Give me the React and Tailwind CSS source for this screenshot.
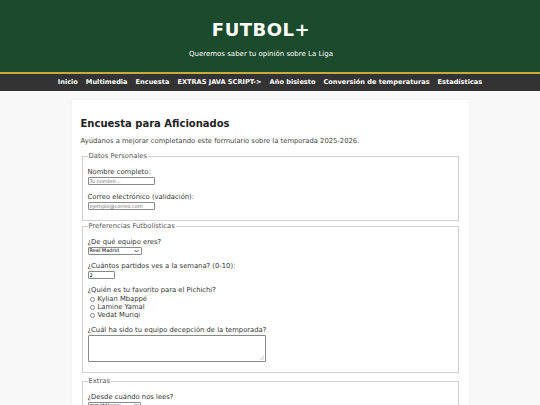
import React from 'react';

const navItems = [
  'Inicio',
  'Multimedia',
  'Encuesta',
  'EXTRAS JAVA SCRIPT->',
  'Año bisiesto',
  'Conversión de temperaturas',
  'Estadísticas',
];

const players = ['Kylian Mbappé', 'Lamine Yamal', 'Vedat Muriqi'];

const Label = ({ children, className = 'mt-[8px]' }) => (
  <label className={`block leading-[8px] ${className}`}>{children}</label>
);

const Fieldset = ({ legend, className = '', children }) => (
  <fieldset className={`mx-[1px] border border-[#cfcfcf] px-[5px] pb-[10px] ${className}`}>
    <legend className="px-[1px] leading-[8px] text-[#555]">{legend}</legend>
    {children}
  </fieldset>
);

const inputCls =
  'mt-[1px] block h-[8px] rounded-[1px] border border-[#8a8a8a] px-[1px] text-[5px] text-black placeholder:text-[#6f6f6f]';

export default function App() {
  return (
    <div
      className="min-h-[405px] bg-[#f8f8f8] text-[6.8px] text-[#333]"
      style={{ fontFamily: '"DejaVu Sans", Verdana, sans-serif' }}
    >
      {/* cabecera */}
      <header className="flex h-[72px] flex-col items-center bg-[#1c4a2c] pr-[18px] text-white">
        <h1 className="mt-[20px] text-[18px] font-bold leading-[20px] tracking-[0.5px]">FUTBOL+</h1>
        <p className="mt-[10px] text-[7px] leading-[8px]">Queremos saber tu opinión sobre La Liga</p>
      </header>
      <div className="h-[2px] bg-[#c7ab3e]" />
      <nav className="flex h-[17px] items-center justify-center gap-[8px] bg-[#333] text-[6.6px] font-bold text-white">
        {navItems.map((item) => (
          <a key={item} href="#">
            {item}
          </a>
        ))}
      </nav>

      {/* formulario */}
      <main className="mx-auto mt-[9px] w-[397px] bg-white px-[9px] pt-[18px] pb-[20px] shadow-[0_0_3px_rgba(0,0,0,0.06)]">
        <h2 className="text-[10px] font-bold leading-[12px] text-[#222]">Encuesta para Aficionados</h2>
        <p className="mt-[7px] leading-[8px] text-[#444]">
          Ayúdanos a mejorar completando este formulario sobre la temporada 2025-2026.
        </p>

        <form className="mt-[7px]">
          <Fieldset legend="Datos Personales">
            <Label>Nombre completo:</Label>
            <input type="text" placeholder="Tu nombre..." className={`${inputCls} w-[67px]`} />
            <Label>Correo electrónico (validación):</Label>
            <input type="email" placeholder="ejemplo@correo.com" className={`${inputCls} w-[67px]`} />
          </Fieldset>

          <Fieldset legend="Preferencias Futbolísticas" className="mt-[1px]">
            <Label>¿De qué equipo eres?</Label>
            <div className="mt-[1px] flex h-[8px] w-[54px] items-center justify-between rounded-[1px] border border-[#8a8a8a] px-[1px] text-[5px] text-black">
              <span>Real Madrid</span>
              <svg width="5" height="4" viewBox="0 0 10 6" className="mr-[1px]">
                <path d="M1 1l4 4 4-4" fill="none" stroke="#222" strokeWidth="1.6" />
              </svg>
            </div>
            <Label className="mt-[7px]">¿Cuántos partidos ves a la semana? (0-10):</Label>
            <input type="text" defaultValue="2" className={`${inputCls} w-[27px]`} />
            <Label className="mt-[7px]">¿Quién es tu favorito para el Pichichi?</Label>
            <div className="mt-[1px]">
              {players.map((p) => (
                <div key={p} className="flex h-[8px] items-center gap-[3px] pl-[2px]">
                  <span className="h-[5px] w-[5px] rounded-full border border-[#888]" />
                  <span className="leading-[8px]">{p}</span>
                </div>
              ))}
            </div>
            <Label className="mt-[7px]">¿Cuál ha sido tu equipo decepción de la temporada?</Label>
            <div className="relative mt-[1px] h-[27px] w-[178px] rounded-[1px] border border-[#8a8a8a]">
              <svg width="4" height="4" viewBox="0 0 4 4" className="absolute right-[1px] bottom-[1px]">
                <path d="M4 0L0 4M4 2L2 4" stroke="#aaa" strokeWidth="0.6" />
              </svg>
            </div>
          </Fieldset>

          <Fieldset legend="Extras" className="mt-[4px]">
            <Label>¿Desde cuándo nos lees?</Label>
            <div className="mt-[1px] flex h-[8px] w-[53px] items-center justify-between rounded-[1px] border border-[#8a8a8a] px-[1px] text-[5px] text-black">
              <span>mm/dd/yyyy</span>
              <svg width="5" height="5" viewBox="0 0 10 10">
                <rect x="1" y="2" width="8" height="7" fill="none" stroke="#222" strokeWidth="1.2" />
                <rect x="1" y="2" width="8" height="2" fill="#222" />
              </svg>
            </div>
            <div className="h-[20px]" />
          </Fieldset>
        </form>
      </main>
    </div>
  );
}
